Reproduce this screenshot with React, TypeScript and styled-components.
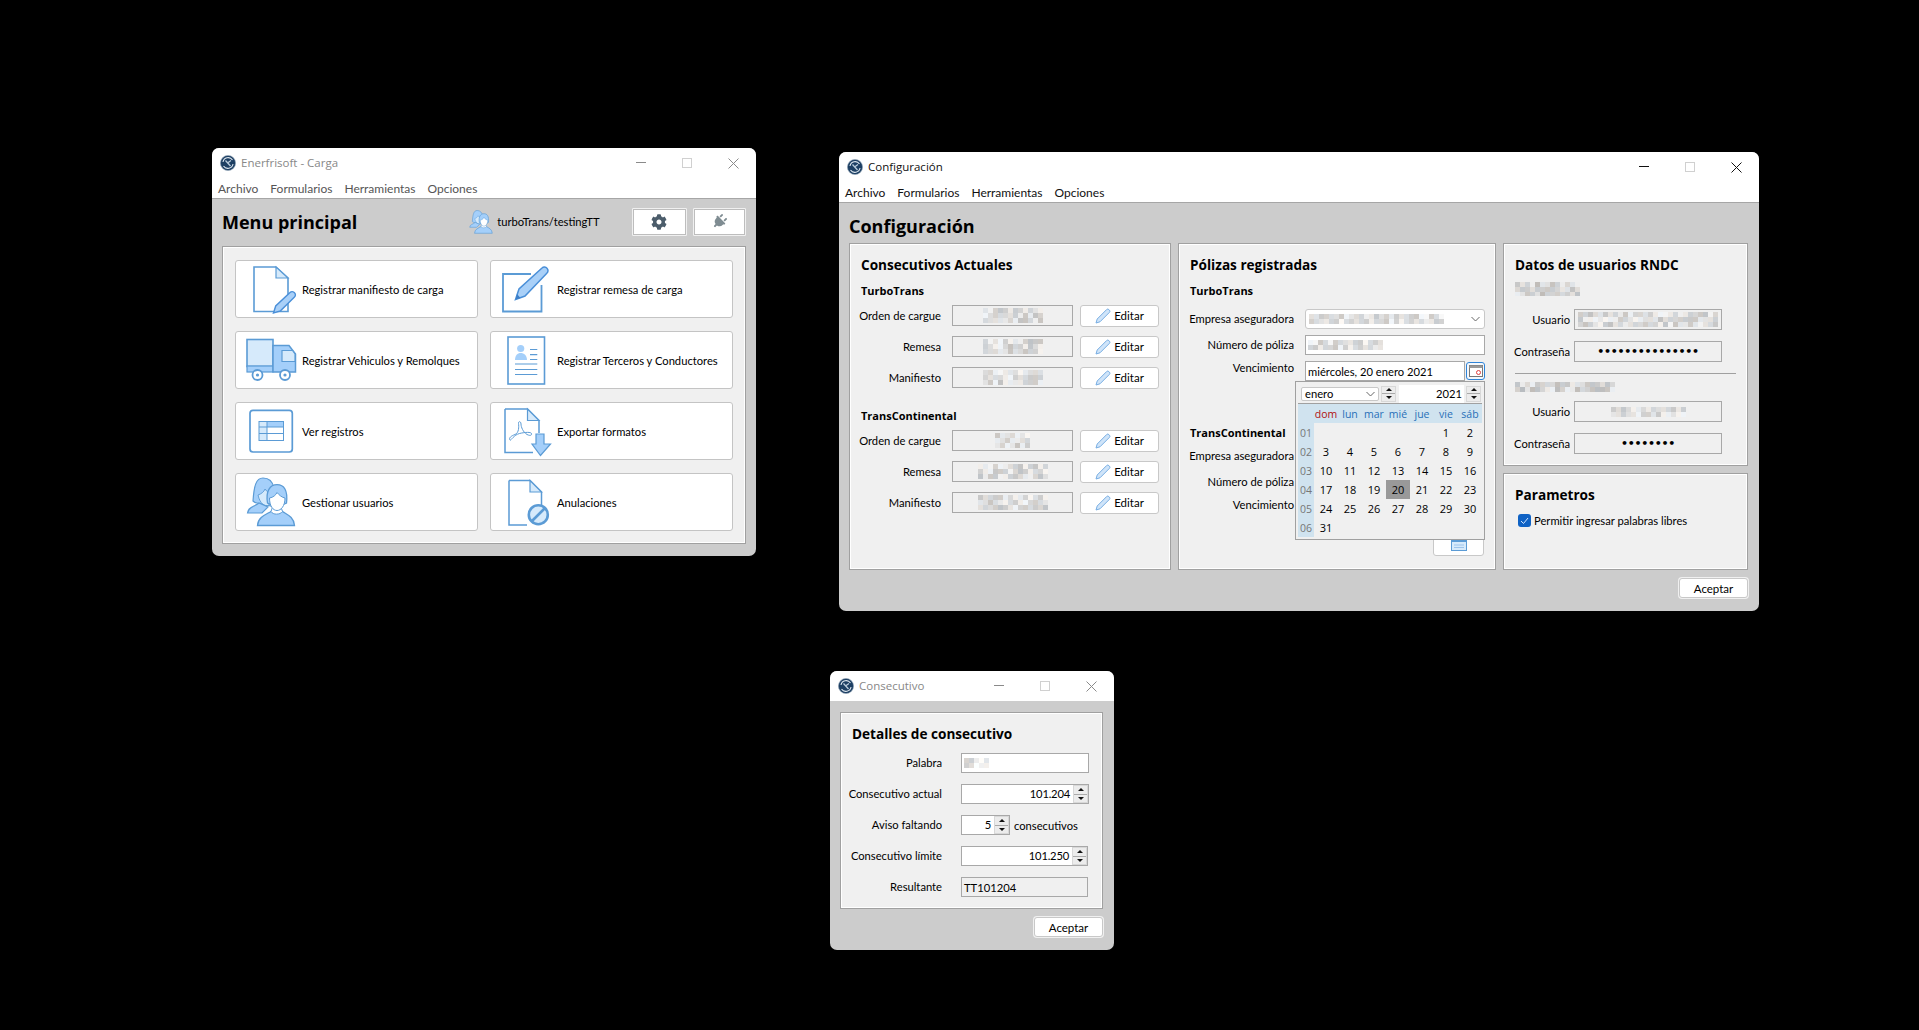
import React from "react";
import styled, { createGlobalStyle } from "styled-components";
import { FaCog, FaPlug } from "react-icons/fa";

const Global = createGlobalStyle`
  html, body { margin: 0; padding: 0; background: #000; }
  body { width: 1919px; height: 1030px; overflow: hidden; font-family: Lato, "Open Sans", sans-serif; font-size: 11.2px; color: #000; }
  #root { position: relative; width: 1919px; height: 1030px; }
`;

const Window = styled.section<{ $x: number; $y: number; $w: number; $h: number }>`
  position: absolute;
  left: ${p => p.$x}px;
  top: ${p => p.$y}px;
  width: ${p => p.$w}px;
  height: ${p => p.$h}px;
  display: flex;
  flex-direction: column;
  background: #cccccc;
  border-radius: 7px;
  overflow: hidden;
`;
const TitleBar = styled.div<{ $active?: boolean }>`
  height: 30px;
  flex: none;
  display: flex;
  align-items: center;
  padding-left: 8px;
  gap: 5px;
  background: #fff;
  color: ${p => (p.$active ? "#111" : "#888")};
  font-family: "Open Sans", sans-serif;
  font-size: 11.5px;
  line-height: 14px;
`;
const Controls = styled.div`
  margin-left: auto;
  display: flex;
`;
const ControlSlot = styled.span`
  width: 46px;
  height: 30px;
  display: flex;
  align-items: center;
  justify-content: center;
`;
const MenuBar = styled.nav<{ $dim?: boolean }>`
  height: 21px;
  flex: none;
  box-sizing: border-box;
  display: flex;
  align-items: center;
  gap: 12px;
  padding: 0 0 0 6px;
  background: #fff;
  border-bottom: 1px solid #a6a6a6;
  font-size: 12px;
  color: ${p => (p.$dim ? "#555" : "#111")};
`;
const MainHeader = styled.header`
  height: 47px;
  box-sizing: border-box;
  flex: none;
  display: flex;
  align-items: center;
  padding: 0 10.5px 2px 10px;
`;
const PageTitle = styled.h1`
  margin: 0;
  font-family: "Open Sans", sans-serif;
  font-size: 18px;
  line-height: 24px;
  font-weight: 700;
`;
const UserChip = styled.div`
  margin-left: auto;
  margin-right: 26px;
  display: flex;
  align-items: center;
  gap: 4px;
`;
const HeadButton = styled.button<{ $w: number }>`
  width: ${p => p.$w}px;
  height: 28px;
  padding: 0;
  margin-left: 6px;
  display: flex;
  align-items: center;
  justify-content: center;
  background: #fff;
  border: 1px solid #f0f0f0;
  border-radius: 1px;
  box-shadow: inset 0 0 0 1px #bdbdbd;
`;
const RotatedPlug = styled(FaPlug)`
  transform: rotate(45deg);
  color: #7f8c92;
`;
const MenuPanel = styled.div`
  margin: 0 10.5px 12px 10px;
  flex: 1;
  display: grid;
  grid-template-columns: 1fr 1fr;
  grid-auto-rows: 58px;
  gap: 13px 12.5px;
  padding: 13px 12px 12px;
  background: #f0f0f0;
  border: 1px solid #a0a0a0;
  box-shadow: inset 0 0 0 1px #fff;
  box-sizing: border-box;
`;
const BigButton = styled.button`
  display: flex;
  align-items: center;
  padding: 0 0 0 4px;
  background: #fff;
  border: 1px solid #c4c4c4;
  border-radius: 3px;
  font: inherit;
  color: #000;
  text-align: left;
`;
const IconSvg = styled.svg`
  width: 62px;
  height: 52px;
  flex: none;
`;
const ConfigHeading = styled.div`
  height: 40px;
  flex: none;
  box-sizing: border-box;
  display: flex;
  align-items: center;
  padding: 6px 0 0 10px;
`;
const ConfigColumns = styled.div`
  height: 327px;
  flex: none;
  margin-left: 10px;
  display: grid;
  grid-template-columns: 322px 318px 245px;
  column-gap: 7px;
`;
const Panel = styled.div`
  position: relative;
  box-sizing: border-box;
  background: #f0f0f0;
  border: 1px solid #a0a0a0;
  box-shadow: inset 0 0 0 1px #fff;
  padding: 9px 10px 9px 11px;
  display: flex;
  flex-direction: column;
`;
const Stack = styled.div`
  display: grid;
  grid-template-rows: 223px 97px;
  row-gap: 7px;
`;
const PanelTitle = styled.h2`
  margin: 0;
  height: 24px;
  line-height: 24px;
  font-family: "Open Sans", sans-serif;
  font-size: 13.6px;
  font-weight: 700;
`;
const SubTitle = styled.h3<{ $mt: number }>`
  margin: ${p => p.$mt}px 0 0;
  height: 20px;
  line-height: 20px;
  font-family: "Open Sans", sans-serif;
  font-size: 11px;
  font-weight: 700;
`;
const Rows = styled.div<{ $mt: number; $gap: number; $cols: string; $h?: number }>`
  margin-top: ${p => p.$mt}px;
  display: grid;
  grid-template-columns: ${p => p.$cols};
  grid-auto-rows: ${p => p.$h || 21}px;
  gap: ${p => p.$gap}px 0;
  align-items: center;
`;
const RowLabel = styled.label<{ $up?: number }>`
  justify-self: end;
  white-space: nowrap;
  line-height: 16px;
  position: relative;
  top: ${p => (p.$up ? -p.$up : 0)}px;
`;
const Field = styled.div<{ $white?: boolean; $align?: string; $w?: number }>`
  box-sizing: border-box;
  height: 100%;
  width: ${p => (p.$w ? `${p.$w}px` : "auto")};
  display: flex;
  align-items: center;
  justify-content: ${p => p.$align || "center"};
  background: ${p => (p.$white ? "#fff" : "#f0f0f0")};
  border: 1px solid #a8a8a8;
  padding: 0 2px;
  overflow: hidden;
  white-space: nowrap;
`;
const EditButton = styled.button`
  height: 22px;
  padding: 0;
  display: flex;
  align-items: center;
  justify-content: center;
  gap: 3px;
  background: #fff;
  border: 1px solid #c8c8c8;
  border-radius: 3px;
  font: inherit;
  font-size: 11.5px;
  color: #000;
`;
const Footer = styled.footer`
  display: flex;
  justify-content: flex-end;
  padding: 8px 11px 0 0;
`;
const AcceptButton = styled.button`
  box-sizing: border-box;
  width: 69px;
  height: 20px;
  padding: 0;
  background: #fff;
  border: 1px solid #c8c8c8;
  border-radius: 3px;
  box-shadow: 0 0 0 1px #f0f0f0;
  font: inherit;
  font-size: 11.5px;
  color: #000;
`;
const PassDots = styled.span`
  font-family: "DejaVu Sans", sans-serif;
  font-size: 11px;
  font-weight: 700;
  letter-spacing: -0.25px;
  line-height: 16px;
`;
const Divider = styled.hr`
  margin: 11px 1px 0 0;
  border: 0;
  border-top: 1px solid #a0a0a0;
`;
const MosaicWrap = styled.div<{ $mt: number }>`
  margin-top: ${p => p.$mt}px;
  display: flex;
  align-items: center;
  height: 14px;
`;
const CheckRow = styled.div`
  margin-top: 7px;
  padding-left: 3px;
  display: flex;
  align-items: center;
  gap: 3px;
`;
const CheckBox = styled.span`
  width: 13px;
  height: 13px;
  border-radius: 3px;
  background: #0f62c4;
  display: flex;
  align-items: center;
  justify-content: center;
`;
const Combo = styled(Field)`
  border-color: #c8c8c8;
  border-radius: 3px;
  justify-content: space-between;
  padding: 0 4px 0 3px;
  background: #fff;
`;
const DateRow = styled.div`
  display: flex;
  height: 100%;
  width: 180px;
  gap: 1px;
`;
const CalendarButton = styled.button`
  width: 19px;
  height: 18px;
  margin-top: 1px;
  padding: 0;
  background: #f4f8fc;
  border: 1px solid #2f84d8;
  border-radius: 3px;
  display: flex;
  align-items: center;
  justify-content: center;
`;
const LowerDate = styled.button`
  align-self: flex-end;
  width: 51px;
  height: 26px;
  margin: 12px 1px 0 0;
  padding: 0 0 4px;
  background: #fff;
  border: 1px solid #c8c8c8;
  border-radius: 3px;
  display: flex;
  align-items: flex-end;
  justify-content: center;
`;
const Popup = styled.div`
  position: absolute;
  left: 116px;
  top: 137px;
  width: 190px;
  height: 159px;
  box-sizing: border-box;
  background: #f0f0f0;
  border: 1px solid #a0a0a0;
  padding: 2px;
`;
const NavBar = styled.div`
  height: 20px;
  display: flex;
  align-items: center;
  gap: 2px;
  padding: 0 0 0 3px;
  box-sizing: border-box;
  border-bottom: 1px solid #a0a0a0;
`;
const NavSpinSlot = styled.div`
  height: 16px;
`;
const MonthSelect = styled.div`
  box-sizing: border-box;
  width: 78px;
  height: 14px;
  padding: 0 3px;
  display: flex;
  align-items: center;
  justify-content: space-between;
  background: #fff;
  border: 1px solid #c8c8c8;
  border-radius: 2px;
`;
const YearField = styled.div`
  width: 65px;
  height: 18px;
  margin-left: 1px;
  padding-right: 2px;
  box-sizing: border-box;
  display: flex;
  align-items: center;
  justify-content: flex-end;
  background: #fff;
`;
const SpinBox = styled.div<{ $w: number }>`
  width: ${p => p.$w}px;
  height: 100%;
  flex: none;
  box-sizing: border-box;
  display: flex;
  flex-direction: column;
  border: 1px solid #d8d8d8;
  background: #ececec;
`;
const SpinPart = styled.span<{ $down?: boolean }>`
  flex: 1;
  display: flex;
  align-items: center;
  justify-content: center;
  &::before {
    content: "";
    border-left: 3px solid transparent;
    border-right: 3px solid transparent;
    ${p => (p.$down ? "border-top: 3px solid #111;" : "border-bottom: 3px solid #111;")}
  }
  & + & {
    border-top: 1px solid #aaa;
  }
`;
const CalGrid = styled.div`
  display: grid;
  grid-template-columns: 16px repeat(7, 24px);
  grid-template-rows: repeat(7, 19px);
  font-family: "Open Sans", sans-serif;
`;
const HeadCell = styled.span<{ $red?: boolean }>`
  display: flex;
  align-items: center;
  justify-content: center;
  background: #d0e3ef;
  color: ${p => (p.$red ? "#b0100f" : "#2870b8")};
  font-size: 10.5px;
`;
const WeekCell = styled.span`
  display: flex;
  align-items: center;
  justify-content: center;
  background: #d0e3ef;
  color: #777;
  font-size: 10.5px;
`;
const DayCell = styled.span<{ $sel?: boolean }>`
  display: flex;
  align-items: center;
  justify-content: center;
  background: ${p => (p.$sel ? "#999" : "transparent")};
  font-size: 11px;
`;
const ConsecPanel = styled(Panel)`
  margin: 11px 11px 0 10px;
  height: 197px;
  flex: none;
  padding: 9px 11px;
`;
const ConsecSuffix = styled.div`
  display: flex;
  align-items: center;
  gap: 4px;
  height: 100%;
`;
const SpinField = styled.div<{ $w: number }>`
  box-sizing: border-box;
  width: ${p => p.$w}px;
  height: 100%;
  display: flex;
  align-items: stretch;
  background: #fff;
  border: 1px solid #a8a8a8;
`;
const SpinValue = styled.span`
  flex: 1;
  text-align: right;
  line-height: 18px;
  padding-right: 3px;
  letter-spacing: -0.2px;
`;

const blue = "#5b9bd5";
const pale = "#d6eafb";
const mid = "#a4cffa";

const Logo = () => (
  <svg width="16" height="16" viewBox="0 0 16 16">
    <circle cx="8" cy="8" r="7.6" fill="#1d3f63" />
    <circle cx="8" cy="8" r="7.6" fill="none" stroke="#8fa3b5" strokeWidth=".6" />
    <path d="M3 7A5.200 5.200 0 0 1 12.500 5M13 9A5.200 5.200 0 0 1 3.500 11" fill="none" stroke="#dfe8f0" strokeWidth="1.100" />
    <path d="M5.500 5.500L10.500 11M7.500 8L11 5.500" fill="none" stroke="#b9cbdb" strokeWidth="1.300" />
  </svg>
);
const WinControls = ({ dim }: { dim?: boolean }) => {
  const c = dim ? "#8a8a8a" : "#111";
  return (
    <Controls>
      <ControlSlot>
        <svg width="10" height="10"><path d="M0 4.500H10" stroke={c} /></svg>
      </ControlSlot>
      <ControlSlot>
        <svg width="10" height="10"><rect x=".5" y=".5" width="9" height="9" fill="none" stroke="#d0d0d0" /></svg>
      </ControlSlot>
      <ControlSlot>
        <svg width="11" height="11"><path d="M.5.5L10.500 10.500M10.500.5L.5 10.500" stroke={c} fill="none" /></svg>
      </ControlSlot>
    </Controls>
  );
};
const Menus = ({ dim }: { dim?: boolean }) => (
  <MenuBar $dim={dim}>
    <span>Archivo</span>
    <span>Formularios</span>
    <span>Herramientas</span>
    <span>Opciones</span>
  </MenuBar>
);

const Mosaic = ({ w, h, seed, light = 0 }: { w: number; h: number; seed: number; light?: number }) => {
  const cell = 5;
  const rects: React.ReactNode[] = [];
  let s = seed;
  for (let y = 0; y < h; y += cell) {
    for (let x = 0; x < w; x += cell) {
      s = (s * 9301 + 49297) % 233280;
      const r = s / 233280;
      const v = Math.round(188 + r * 52 + light);
      const tint = (s % 3) - 1;
      rects.push(
        <rect key={`${x}-${y}`} x={x} y={y} width={cell} height={cell}
          fill={`rgb(${v + tint * 4},${v},${v - tint * 4})`} />
      );
    }
  }
  return (
    <svg width={w} height={h} shapeRendering="crispEdges" style={{ flex: "none" }}>
      {rects}
    </svg>
  );
};

const Pencil = () => (
  <svg width="16" height="16" viewBox="0 0 16 16">
    <path d="M1 15l1.200-4L11.600 1.600a1.600 1.600 0 0 1 2.300 0l.5.5a1.600 1.600 0 0 1 0 2.300L5 13.800z" fill="#cfe4f9" stroke="#78aee3" strokeWidth="1" />
  </svg>
);
const Calendar = () => (
  <svg width="14" height="12" viewBox="0 0 14 12">
    <rect x=".5" y=".5" width="13" height="11" fill="#fff" stroke="#777" />
    <rect x=".5" y=".5" width="13" height="2.500" fill="#999" />
    <circle cx="9.500" cy="7.500" r="2" fill="none" stroke="#e04040" />
  </svg>
);
const LowerCal = () => (
  <svg width="16" height="12" viewBox="0 0 16 12">
    <rect x="0" y="0" width="16" height="12" fill={blue} />
    <rect x="1" y="3" width="14" height="8" fill="#d6eafb" />
    <path d="M3 6H13M3 8.500H13" stroke="#9cc4ec" />
  </svg>
);

const Doc = ({ x, y, r, b, f, fy }: { x: number; y: number; r: number; b: number; f: number; fy: number }) => (
  <>
    <path d={`M${x} ${y}H${f}L${r} ${fy}V${b}H${x}Z`} fill="#fff" stroke={blue} strokeWidth="1.600" />
    <path d={`M${f} ${y}V${fy}H${r}Z`} fill={pale} stroke={blue} strokeWidth="1.200" />
  </>
);
const usersArt = (
  <>
    <path d="M13 25C14 10 16 2 23 2C30 2 33 7 34 12L31 30L17 27C15 27 14 26 13 25Z" fill={mid} stroke={blue} strokeWidth="1.200" />
    <path d="M18 19C21 18 24 16 25 13C27 16 29 17 31 18L29 29C25 31 20 28 18 19Z" fill={pale} stroke={blue} strokeWidth=".9" />
    <path d="M7.500 37C8 31 14 31 19 27L28 31L22 37Z" fill={mid} stroke={blue} strokeWidth="1.200" />
    <path d="M17.500 49.500C18 41 26 38.500 31 35.500L42.500 35.500C47 38.500 54 41 54.500 49.500Z" fill={mid} stroke={blue} strokeWidth="1.300" />
    <path d="M31 35.500C33 39 40 39 42.500 35.500L41 31H32.500Z" fill="#fff" stroke={blue} strokeWidth="1" />
    <path d="M27.500 27C25.500 15 30 8.700 37 8.700C44 8.700 48 14 46.500 27L44 28H30Z" fill={mid} stroke={blue} strokeWidth="1.300" />
    <path d="M29.500 22C33 21.500 36 19 37 16.500C39 19 42 21.500 45 22C45 30 41 34.500 37 34.500C33 34.500 29.500 30 29.500 22Z" fill="#fff" stroke={blue} strokeWidth="1" />
  </>
);
const icons: Record<string, React.ReactNode> = {
  manifest: (
    <>
      <Doc x={14} y={4} r={48} b={48.500} f={36} fy={15} />
      <path d="M33.500 50l2.200-7L50 29.500a3 3 0 0 1 4.500 0.200 3 3 0 0 1 0 4.300L40.500 47.800z" fill="#a9d0f8" stroke="#4a8fd8" strokeWidth="1.400" />
    </>
  ),
  note: (
    <>
      <path d="M46.500 22V48.500H8V11H36" fill="#fff" stroke={blue} strokeWidth="1.800" />
      <path d="M20.500 36.500L24 26 47 5a3.400 3.400 0 0 1 5 0.300 3.400 3.400 0 0 1-0.200 5L30 33z" fill="#a9d0f8" stroke="#4a8fd8" strokeWidth="1.500" />
      <path d="M20.500 36.500L22 31l3.500 4z" fill="#3d7fc8" />
    </>
  ),
  truck: (
    <>
      <rect x="7" y="5.500" width="26" height="27" fill={pale} stroke={blue} strokeWidth="1.600" />
      <rect x="7" y="32" width="26" height="6" fill={mid} stroke={blue} strokeWidth="1.200" />
      <path d="M33 11.500H49L55.500 20V38H33Z" fill={mid} stroke={blue} strokeWidth="1.500" />
      <path d="M42 16.500H52.500L55 20V27.500H42Z" fill={pale} stroke={blue} strokeWidth="1.200" />
      <circle cx="17.500" cy="41" r="5" fill="#fff" stroke={blue} strokeWidth="1.800" />
      <circle cx="17.500" cy="41" r="1.600" fill={blue} />
      <circle cx="45" cy="41" r="5" fill="#fff" stroke={blue} strokeWidth="1.800" />
      <circle cx="45" cy="41" r="1.600" fill={blue} />
    </>
  ),
  card: (
    <>
      <rect x="13" y="3" width="36.500" height="47" fill="#fff" stroke={blue} strokeWidth="1.600" />
      <circle cx="25.700" cy="14.500" r="3.600" fill={mid} />
      <path d="M20 26c0-4.500 2.500-7 5.700-7s6.300 2.500 6.300 7z" fill={mid} />
      <path d="M35 15.500H42.300M35 20.700H42.300M35 25.500H42.300M20 30H42.300M20 35.500H42.300M20 40.500H42.300" stroke={blue} strokeWidth="1.200" />
    </>
  ),
  table: (
    <>
      <rect x="10" y="5.300" width="42.300" height="41.700" rx="3" fill="#fff" stroke={blue} strokeWidth="1.700" />
      <rect x="19" y="16.500" width="24.500" height="19" fill="#fff" />
      <rect x="19" y="16.500" width="24.500" height="5.500" fill={mid} />
      <rect x="19" y="16.500" width="8" height="19" fill={pale} />
      <path d="M19 22H43.500M19 28.500H43.500M27 16.500V35.500" stroke={blue} strokeWidth="1" />
      <rect x="19" y="16.500" width="24.500" height="19" fill="none" stroke={blue} strokeWidth="1" />
    </>
  ),
  pdf: (
    <>
      <path d="M10 4H32.500L44 15.500V28M38 47.500H10V4" fill="#fff" stroke={blue} strokeWidth="1.500" />
      <path d="M32.500 4V15.500H44Z" fill={pale} stroke={blue} strokeWidth="1.200" />
      <path d="M15 35c-1.500-2 1-4 5-5.500s4-8 3.500-11c-.5-2.500 2.500-2.500 2.500 .5s2 8 6 10.500c3 1.500 5 1 4.500-1c-.5-1.500-6-1.500-12 0s-9 8-9.500 6.500z" fill="none" stroke={blue} strokeWidth="1" />
      <path d="M41 29H49V39H55.500L45.500 50.500 37 39H41Z" fill={mid} stroke={blue} strokeWidth="1.200" />
    </>
  ),
  users: usersArt,
  cancel: (
    <>
      <path d="M14 4.500H35L46.500 16V30M32 49H14V4.500" fill="#fff" stroke={blue} strokeWidth="1.500" />
      <path d="M35 4.500V16H46.500Z" fill={pale} stroke={blue} strokeWidth="1.200" />
      <circle cx="43.300" cy="38.700" r="9.500" fill={pale} stroke={blue} strokeWidth="2.600" />
      <path d="M36.500 45.500L50 32" stroke={blue} strokeWidth="2.600" />
    </>
  ),
};
const menuItems = [
  ["manifest", "Registrar manifiesto de carga"],
  ["note", "Registrar remesa de carga"],
  ["truck", "Registrar Vehiculos y Remolques"],
  ["card", "Registrar Terceros y Conductores"],
  ["table", "Ver registros"],
  ["pdf", "Exportar formatos"],
  ["users", "Gestionar usuarios"],
  ["cancel", "Anulaciones"],
];

const UserGlyph = () => (
  <svg width="24" height="24" viewBox="6 1 50 50">
    {usersArt}
  </svg>
);
const Chevron = () => (
  <svg width="9" height="6" viewBox="0 0 9 6"><path d="M.5 1L4.500 5 8.500 1" fill="none" stroke="#666" /></svg>
);

const ConsecRows = ({ rows, mt }: { rows: [string, number, number][]; mt: number }) => (
  <Rows $mt={mt} $gap={10} $cols="80px 11px 121px 7px 79px">
    {rows.map(([label, w, seed]) => (
      <React.Fragment key={label}>
        <RowLabel>{label}</RowLabel>
        <span />
        <Field><Mosaic w={w} h={15} seed={seed} light={6} /></Field>
        <span />
        <EditButton><Pencil />Editar</EditButton>
      </React.Fragment>
    ))}
  </Rows>
);

const Spin = ({ w }: { w: number }) => (
  <SpinBox $w={w}>
    <SpinPart />
    <SpinPart $down />
  </SpinBox>
);

const weeks = [
  ["01", "", "", "", "", "", "1", "2"],
  ["02", "3", "4", "5", "6", "7", "8", "9"],
  ["03", "10", "11", "12", "13", "14", "15", "16"],
  ["04", "17", "18", "19", "20", "21", "22", "23"],
  ["05", "24", "25", "26", "27", "28", "29", "30"],
  ["06", "31", "", "", "", "", "", ""],
];

const CalendarPopup = () => (
  <Popup>
    <NavBar>
      <MonthSelect>enero<Chevron /></MonthSelect>
      <NavSpinSlot><Spin w={15} /></NavSpinSlot>
      <YearField>2021</YearField>
      <NavSpinSlot><Spin w={15} /></NavSpinSlot>
    </NavBar>
    <CalGrid>
      <HeadCell />
      {["dom", "lun", "mar", "mié", "jue", "vie", "sáb"].map((d, i) => (
        <HeadCell key={d} $red={i === 0}>{d}</HeadCell>
      ))}
      {weeks.map(w =>
        w.map((d, i) =>
          i === 0 ? (
            <WeekCell key={d}>{d}</WeekCell>
          ) : (
            <DayCell key={`${w[0]}-${i}`} $sel={d === "20"}>{d}</DayCell>
          )
        )
      )}
    </CalGrid>
  </Popup>
);

const MainWindow = () => (
  <Window $x={212} $y={148} $w={544} $h={408}>
    <TitleBar>
      <Logo />
      Enerfrisoft - Carga
      <WinControls dim />
    </TitleBar>
    <Menus dim />
    <MainHeader>
      <PageTitle>Menu principal</PageTitle>
      <UserChip><UserGlyph />turboTrans/testingTT</UserChip>
      <HeadButton $w={55}><FaCog size={16} color="#4c5d6b" /></HeadButton>
      <HeadButton $w={53}><RotatedPlug size={15} /></HeadButton>
    </MainHeader>
    <MenuPanel>
      {menuItems.map(([k, label]) => (
        <BigButton key={k}>
          <IconSvg viewBox="0 0 62 52">{icons[k]}</IconSvg>
          {label}
        </BigButton>
      ))}
    </MenuPanel>
  </Window>
);

const ConfigWindow = () => (
  <Window $x={839} $y={152} $w={920} $h={459}>
    <TitleBar $active>
      <Logo />
      Configuración
      <WinControls />
    </TitleBar>
    <Menus />
    <ConfigHeading><PageTitle>Configuración</PageTitle></ConfigHeading>
    <ConfigColumns>
      <Panel>
        <PanelTitle>Consecutivos Actuales</PanelTitle>
        <SubTitle $mt={4}>TurboTrans</SubTitle>
        <ConsecRows mt={4} rows={[["Orden de cargue", 60, 11], ["Remesa", 60, 29], ["Manifiesto", 60, 57]]} />
        <SubTitle $mt={18}>TransContinental</SubTitle>
        <ConsecRows mt={4} rows={[["Orden de cargue", 35, 73], ["Remesa", 70, 91], ["Manifiesto", 70, 123]]} />
      </Panel>
      <Panel>
        <PanelTitle>Pólizas registradas</PanelTitle>
        <SubTitle $mt={4}>TurboTrans</SubTitle>
        <Rows $mt={8} $gap={6} $h={20} $cols="104px 11px 180px">
          <RowLabel>Empresa aseguradora</RowLabel>
          <span />
          <Combo $white><Mosaic w={135} h={10} seed={7} light={10} /><Chevron /></Combo>
          <RowLabel>Número de póliza</RowLabel>
          <span />
          <Field $white $align="flex-start"><Mosaic w={75} h={10} seed={17} light={10} /></Field>
          <RowLabel $up={3}>Vencimiento</RowLabel>
          <span />
          <DateRow>
            <Field $white $align="flex-start" $w={160}>miércoles, 20 enero 2021</Field>
            <CalendarButton><Calendar /></CalendarButton>
          </DateRow>
        </Rows>
        <SubTitle $mt={42}>TransContinental</SubTitle>
        <Rows $mt={3} $gap={6} $h={20} $cols="104px 11px 180px">
          <RowLabel>Empresa aseguradora</RowLabel>
          <span />
          <Combo $white />
          <RowLabel>Número de póliza</RowLabel>
          <span />
          <Field $white />
          <RowLabel $up={3}>Vencimiento</RowLabel>
          <span />
          <Field $white />
        </Rows>
        <LowerDate><LowerCal /></LowerDate>
        <CalendarPopup />
      </Panel>
      <Stack>
        <Panel>
          <PanelTitle>Datos de usuarios RNDC</PanelTitle>
          <MosaicWrap $mt={5}><Mosaic w={65} h={14} seed={201} /></MosaicWrap>
          <Rows $mt={13} $gap={11} $cols="55px 4px 148px">
            <RowLabel>Usuario</RowLabel>
            <span />
            <Field><Mosaic w={140} h={15} seed={301} light={6} /></Field>
            <RowLabel>Contraseña</RowLabel>
            <span />
            <Field><PassDots>•••••••••••••••</PassDots></Field>
          </Rows>
          <Divider />
          <MosaicWrap $mt={6}><Mosaic w={100} h={10} seed={401} /></MosaicWrap>
          <Rows $mt={7} $gap={11} $cols="55px 4px 148px">
            <RowLabel>Usuario</RowLabel>
            <span />
            <Field><Mosaic w={75} h={10} seed={501} light={6} /></Field>
            <RowLabel>Contraseña</RowLabel>
            <span />
            <Field><PassDots>••••••••</PassDots></Field>
          </Rows>
        </Panel>
        <Panel>
          <PanelTitle>Parametros</PanelTitle>
          <CheckRow>
            <CheckBox>
              <svg width="9" height="8" viewBox="0 0 9 8"><path d="M1 4l2.500 2.500L8 1" fill="none" stroke="#cfe4ff" /></svg>
            </CheckBox>
            Permitir ingresar palabras libres
          </CheckRow>
        </Panel>
      </Stack>
    </ConfigColumns>
    <Footer><AcceptButton>Aceptar</AcceptButton></Footer>
  </Window>
);

const SequenceWindow = () => (
  <Window $x={830} $y={671} $w={284} $h={279}>
    <TitleBar>
      <Logo />
      Consecutivo
      <WinControls dim />
    </TitleBar>
    <ConsecPanel>
      <PanelTitle>Detalles de consecutivo</PanelTitle>
      <Rows $mt={7} $gap={11} $h={20} $cols="90px 19px 128px">
        <RowLabel>Palabra</RowLabel>
        <span />
        <Field $white $align="flex-start"><Mosaic w={25} h={10} seed={601} light={15} /></Field>
        <RowLabel>Consecutivo actual</RowLabel>
        <span />
        <SpinField $w={128}><SpinValue>101.204</SpinValue><Spin w={15} /></SpinField>
        <RowLabel>Aviso faltando</RowLabel>
        <span />
        <ConsecSuffix>
          <SpinField $w={49}><SpinValue>5</SpinValue><Spin w={15} /></SpinField>
          consecutivos
        </ConsecSuffix>
        <RowLabel>Consecutivo límite</RowLabel>
        <span />
        <SpinField $w={127}><SpinValue>101.250</SpinValue><Spin w={15} /></SpinField>
        <RowLabel>Resultante</RowLabel>
        <span />
        <Field $align="flex-start" $w={127}>TT101204</Field>
      </Rows>
    </ConsecPanel>
    <Footer><AcceptButton>Aceptar</AcceptButton></Footer>
  </Window>
);

export default function App() {
  return (
    <>
      <Global />
      <MainWindow />
      <ConfigWindow />
      <SequenceWindow />
    </>
  );
}
